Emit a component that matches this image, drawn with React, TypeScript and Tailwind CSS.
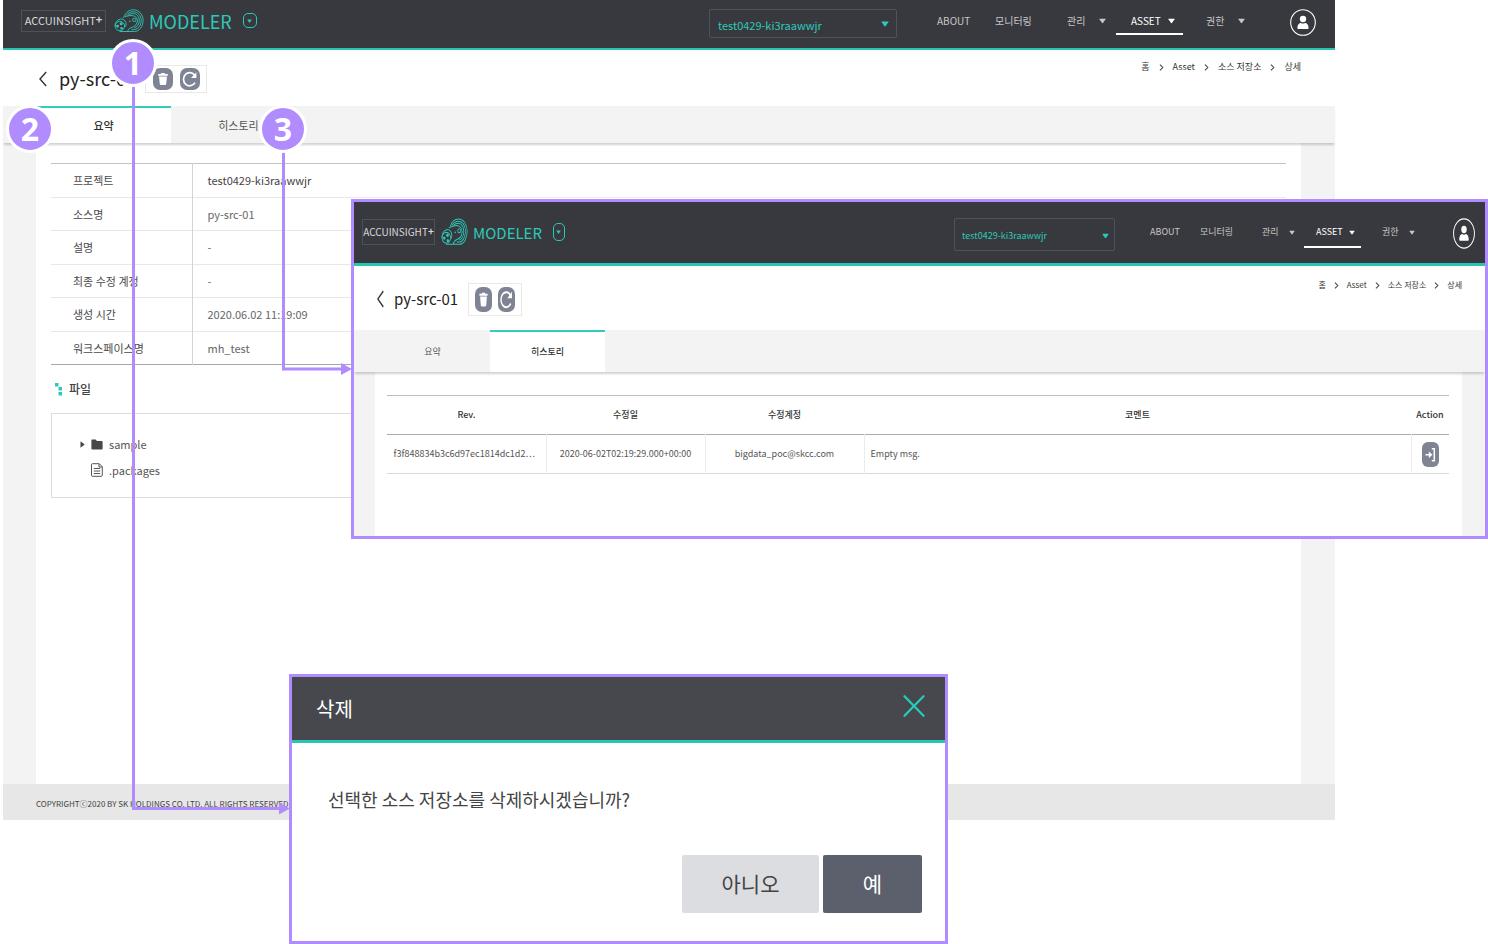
import React from "react";

type Variant = "full" | "inset";

const TEAL = "#2cc9b8";

function MascotLogo({ className }: { className: string }) {
  return (
    <svg viewBox="0 0 30 24" preserveAspectRatio="none" className={className} fill="none" stroke={TEAL} strokeWidth=".9" aria-hidden="true">
      <path d="M10.500 7C12 3 15.500.8 19.300.8c5.600 0 9.800 4.600 9.800 10.600 0 5.800-3.600 11.100-8.600 11.100H5.500" />
      <path d="M12.300 6.400c1.600-2.300 4.200-3.700 7-3.700 4.500 0 7.900 3.900 7.900 8.700 0 4.800-2.800 8.800-6.700 9.200h-3" />
      <path d="M14 6.400c1.400-1.200 3.200-1.900 5.200-1.900 3.500 0 6.100 3.100 6.100 6.900 0 3.600-2 6.700-5 7.400" />
      <path d="M8.800 8.400c2-.8 4.200-1.500 6.700-1.800 4.200-.5 7.600 1 7.900 4.600.2 3.500-2.200 6.200-5.200 7.100-2.500.7-4 1.800-4.700 4.200" />
      <circle cx="20.300" cy="10.900" r="1.700" />
      <circle cx="15.800" cy="12.300" r=".8" fill={TEAL} stroke="none" />
      <path d="M1 17.200c0-3.600 2.100-6.600 5.300-7.200 2-.3 3.800.5 4.900 2.100 1 1.600 1.200 3.600.4 5.600" />
      <circle cx="5.900" cy="17" r="4.700" />
      <circle cx="3.600" cy="17.200" r="1.400" fill={TEAL} stroke="none" />
      <circle cx="7.200" cy="14.700" r="1.500" fill={TEAL} stroke="none" />
      <circle cx="7.600" cy="19.200" r="1.300" fill={TEAL} stroke="none" />
    </svg>
  );
}

function Caret({ className }: { className: string }) {
  return (
    <svg viewBox="0 0 8 6" className={className} fill="currentColor" aria-hidden="true">
      <path d="M.8.500h6.400q.6 0 .3.600L4.500 5.300q-.5.700-1 0L.500 1.100Q.2.500.8.500z" />
    </svg>
  );
}

const headerStyles = {
  full: {
    bar: "h-[50px] border-b-2 pl-[18px] pr-[19px]",
    brand: "h-[22px] w-[85px] text-[11px]",
    logo: "ml-2 h-[24px] w-[30px]",
    product: "ml-[5px] text-[18px]",
    toggle: "ml-[11px] h-[15px] w-[14px] rounded-[5px]",
    left: "-mt-[7px]",
    selectBox: "h-[29px] w-[188px] -mt-px",
    select: "pl-2 pt-[3px] text-[11px]",
    selectCaret: "right-2 top-[12px] h-[6px] w-[8px]",
    nav: "leading-[28px] text-[10px] ml-[40px] pt-[7px]",
    caret: "h-[6px] w-[7px]",
    about: "w-[58px]",
    monitor: "w-[72px]",
    manage: "w-[49px] pr-[10px]",
    asset: "w-[67px] pl-[15px] pr-2",
    rights: "w-[39px] ml-[23px]",
    avatar: "h-[27px] w-[26px]",
    avatarWrap: "-mt-[3px] ml-[45px]",
  },
  inset: {
    bar: "h-[64px] border-b-3 pl-2 pr-[10px]",
    brand: "h-[26px] w-[73px] text-[10px]",
    logo: "ml-[6px] h-[28px] w-[27px]",
    product: "ml-[5px] text-[15px]",
    toggle: "ml-[11px] h-[18px] w-[12px] rounded-[5px]",
    left: "-mt-px",
    selectBox: "h-[33px] w-[161px] mt-1",
    select: "pl-[7px] pt-[3px] text-[9px]",
    selectCaret: "right-[6px] top-[15px] h-[6px] w-[7px]",
    nav: "leading-[32px] text-[9px] ml-[35px] pt-[14px]",
    caret: "h-[5px] w-[6px]",
    about: "w-[50px]",
    monitor: "w-[62px]",
    manage: "w-[42px] pr-[9px]",
    asset: "w-[57px] pl-[12px] pr-[6px]",
    rights: "w-[33px] ml-[21px]",
    avatar: "h-[31px] w-[22px]",
    avatarWrap: "mt-px ml-[38px]",
  },
};

function AppHeader({ variant }: { variant: Variant }) {
  const s = headerStyles[variant];
  return (
    <header className={`flex items-center border-[#28c5b5] bg-[#38393e] ${s.bar}`}>
      <div className={`flex items-center ${s.left}`}>
        <a href="#home" className={`flex items-center justify-center border border-[#505158] leading-none text-[#d8d8da] ${s.brand}`}>
          ACCUINSIGHT<span className="mb-[3px] font-bold">+</span>
        </a>
        <MascotLogo className={s.logo} />
        <span className={`leading-none text-[#2cc9b8] ${s.product}`}>MODELER</span>
        <button type="button" aria-label="Switch product" className={`flex items-center justify-center border border-[#2cc9b8] text-[#2cc9b8] ${s.toggle}`}>
          <Caret className="h-[4px] w-[5px]" />
        </button>
      </div>

      <div className={`relative ml-auto ${s.selectBox}`}>
        <select aria-label="Project" className={`h-full w-full appearance-none rounded-[2px] border border-[#505160] bg-transparent text-[#2cc9b8] ${s.select}`}>
          <option>test0429-ki3raawwjr</option>
        </select>
        <Caret className={`pointer-events-none absolute text-[#2cc9b8] ${s.selectCaret}`} />
      </div>

      <nav className={`flex items-start self-start whitespace-nowrap text-[#c6c6c9] ${s.nav}`}>
        <a href="#about" className={s.about}>ABOUT</a>
        <a href="#monitoring" className={s.monitor}>모니터링</a>
        <a href="#manage" className={`flex items-center justify-between ${s.manage}`}>
          관리 <Caret className={s.caret} />
        </a>
        <a href="#asset" className={`flex items-center justify-between text-white shadow-[inset_0_-2px_#ffffff] ${s.asset}`}>
          ASSET <Caret className={s.caret} />
        </a>
        <a href="#rights" className={`flex items-center justify-between ${s.rights}`}>
          권한 <Caret className={s.caret} />
        </a>
      </nav>

      <button type="button" aria-label="Account" className={s.avatarWrap}>
        <svg viewBox="0 0 26 27" preserveAspectRatio="none" className={s.avatar} aria-hidden="true">
          <ellipse cx="13" cy="13.500" rx="12.300" ry="12.800" fill="none" stroke="#fff" strokeWidth="1.100" />
          <circle cx="13" cy="10" r="3.200" fill="#fff" />
          <path d="M7.400 19c0-3.600 1.800-5 3.600-5.100 1 .8 3 .8 4 0 1.800.1 3.600 1.500 3.600 5.100q0 .9-.9.9H8.300q-.9 0-.9-.9z" fill="#fff" />
        </svg>
      </button>
    </header>
  );
}

const titleStyles = {
  full: {
    bar: "h-[56px] pl-[36px] pr-[34px]",
    back: "h-[16px] w-2",
    title: "ml-[12px] w-[86px] text-[18px]",
    row: "mt-px",
    tools: "h-[28px] w-[62px] gap-[7px]",
    tool: "h-[22px] w-[20px] rounded-[7px]",
    crumbs: "gap-[9px] pt-[8px] text-[9px]",
  },
  inset: {
    bar: "h-[64px] pl-[23px] pr-[23px]",
    back: "h-[18px] w-[7px]",
    title: "ml-[10px] w-[74px] text-[15px]",
    row: "mt-px",
    tools: "h-[33px] w-[54px] gap-[6px]",
    tool: "h-[25px] w-[17px] rounded-[7px]",
    crumbs: "gap-2 pt-[10px] text-[8px]",
  },
};

function TrashIcon() {
  return (
    <svg viewBox="0 0 20 22" preserveAspectRatio="none" className="h-full w-full" fill="#fff" aria-hidden="true">
      <path d="M8.300 5h3.400l.5 1h2.600v1.700H5.200V6h2.600zM6 8.400h8l-.8 7.700q-.1 1-1.100 1H7.900q-1 0-1.100-1z" />
    </svg>
  );
}

function RefreshIcon() {
  return (
    <svg viewBox="0 0 20 22" preserveAspectRatio="none" className="h-full w-full" fill="none" stroke="#fff" strokeWidth="1.700" aria-hidden="true">
      <path d="M15 14.600A6.200 6.600 0 1 1 14.800 7.400" />
      <path d="M16.400 4.200v5.700h-5.400z" fill="#fff" stroke="none" />
    </svg>
  );
}

function Chevron() {
  return (
    <svg viewBox="0 0 5 8" className="h-[7px] w-[5px]" fill="none" stroke="#444" strokeWidth="1.200" aria-hidden="true">
      <path d="M.7.700 4 4 .7 7.300" />
    </svg>
  );
}

function TitleBar({ variant }: { variant: Variant }) {
  const s = titleStyles[variant];
  return (
    <div className={`flex items-start justify-between bg-white ${s.bar}`}>
      <div className={`flex h-full items-center ${s.row}`}>
        <a href="#back" aria-label="Back">
          <svg viewBox="0 0 8 16" preserveAspectRatio="none" className={s.back} fill="none" stroke="#333" strokeWidth="1.400" aria-hidden="true">
            <path d="M7.200 1 1 8l6.200 7" />
          </svg>
        </a>
        <h1 className={`-mt-[2px] leading-none whitespace-nowrap text-[#222] ${s.title}`}>py-src-01</h1>
        <div className={`flex items-center justify-center border border-[#e9e9e9] ${s.tools}`}>
          <button type="button" aria-label="Delete" className={`bg-[#7e8493] ${s.tool}`}><TrashIcon /></button>
          <button type="button" aria-label="Refresh" className={`bg-[#7e8493] ${s.tool}`}><RefreshIcon /></button>
        </div>
      </div>
      <nav aria-label="Breadcrumb" className={`flex items-center leading-[18px] whitespace-nowrap text-[#333] ${s.crumbs}`}>
        <a href="#home">홈</a>
        <Chevron />
        <a href="#asset">Asset</a>
        <Chevron />
        <a href="#source">소스 저장소</a>
        <Chevron />
        <span>상세</span>
      </nav>
    </div>
  );
}

const tabStyles = {
  full: { bar: "h-[37px] pl-[33px]", tab: "w-[135px] text-[11px]" },
  inset: { bar: "h-[42px] pl-[21px]", tab: "w-[115px] text-[9px]" },
};

function Tabs({ variant, active }: { variant: Variant; active: number }) {
  const s = tabStyles[variant];
  return (
    <div role="tablist" className={`relative flex bg-[#f3f3f3] shadow-[0_3px_2px_-1px_rgba(0,0,0,0.18)] ${s.bar}`}>
      {["요약", "히스토리"].map((label, i) => (
        <button
          key={label}
          type="button"
          role="tab"
          aria-selected={i === active}
          className={`border-t-2 ${s.tab} ${i === active ? "border-[#33cbbb] bg-white font-medium text-[#333]" : "border-transparent text-[#555]"}`}
        >
          {label}
        </button>
      ))}
    </div>
  );
}

const summary = [
  ["프로젝트", "test0429-ki3raawwjr"],
  ["소스명", "py-src-01"],
  ["설명", "-"],
  ["최종 수정 계정", "-"],
  ["생성 시간", "2020.06.02 11:19:09"],
  ["워크스페이스명", "mh_test"],
];

function SummaryPage() {
  return (
    <div className="mr-[153px] ml-[3px] flex min-h-[820px] flex-col">
      <AppHeader variant="full" />
      <TitleBar variant="full" />
      <Tabs variant="full" active={0} />
      <div className="flex grow bg-[#f3f3f3] pr-[34px] pl-[33px]">
        <main className="grow bg-white px-[15px] pt-5">
          <table className="h-[202px] w-full border-collapse border-t border-b border-t-[#c4c4c4] border-b-[#a8a8a8] text-left text-[11px]">
            <tbody>
              {summary.map(([name, value], i) => (
                <tr key={name} className="border-t border-[#e8e8e8] first:border-t-[#c4c4c4]">
                  <th scope="row" className="w-[141px] border-r border-r-[#d4d4d4] py-0 pl-[22px] font-normal text-[#4a4a4a]">{name}</th>
                  <td className={`py-0 pl-[15px] ${i === 0 ? "text-[#444]" : "text-[#666]"}`}>{value}</td>
                </tr>
              ))}
            </tbody>
          </table>
          <h2 className="mt-[13px] flex h-[22px] items-center gap-[6px] pl-1 text-[12px] font-medium text-[#444]">
            <svg viewBox="0 0 8 13" className="h-[13px] w-2" fill="#26cdbb" aria-hidden="true">
              <path d="M0 0h3.500v3.500H0zM3.500 4H7v3.500H3.500zM3.500 9H7v3.500H3.500z" />
            </svg>
            파일
          </h2>
          <ul className="mt-[13px] flex flex-col border border-[#dcdcdc] pt-[17px] pb-[14px] pl-[28px] text-[11px] leading-[26px] text-[#555]">
            <li className="flex items-center">
              <svg viewBox="0 0 5 7" className="h-[7px] w-[5px]" fill="#444" aria-hidden="true"><path d="M.5.300 4.700 3.500.5 6.700z" /></svg>
              <svg viewBox="0 0 12 11" className="ml-[6px] h-[11px] w-3" fill="#484848" aria-hidden="true">
                <path d="M.8.500h3.900l1.200 1.400h4.900q.8 0 .8.800v7q0 .8-.8.800H1.200q-.8 0-.8-.8V1.200q0-.7.4-.7z" />
              </svg>
              <span className="ml-[6px]">sample</span>
            </li>
            <li className="flex items-center pl-[11px]">
              <svg viewBox="0 0 12 14" className="h-[14px] w-3" fill="none" stroke="#555" aria-hidden="true">
                <path d="M1.500.700h6.800l3 3v8.600q0 1-1 1H1.500q-1 0-1-1V1.700q0-1 1-1zM8 1v3h3M2.800 5.500h6.400M2.800 8h6.400M2.800 10.500h6.400" />
              </svg>
              <span className="ml-[6px]">.packages</span>
            </li>
          </ul>
        </main>
      </div>
      <footer className="h-[36px] bg-[#e7e7e7] pt-[2px] pl-[33px] text-[8px] leading-[36px] whitespace-nowrap text-[#444]">
        COPYRIGHTⓒ2020 BY SK HOLDINGS CO. LTD. ALL RIGHTS RESERVED
      </footer>
    </div>
  );
}

function HistoryWindow() {
  return (
    <section aria-label="히스토리" className="absolute top-[199px] right-0 left-[351px] flex h-[340px] flex-col border-3 border-[#b08cff] bg-white">
      <AppHeader variant="inset" />
      <TitleBar variant="inset" />
      <Tabs variant="inset" active={1} />
      <div className="flex grow bg-[#f3f3f3] pr-[23px] pl-[21px]">
        <main className="grow bg-white pt-[23px] pr-[13px] pl-3">
          <table className="w-full table-fixed border-collapse border-t border-[#bdbdbd] text-[9px] text-[#555]">
            <colgroup>
              <col className="w-[159px]" />
              <col className="w-[159px]" />
              <col className="w-[159px]" />
              <col />
              <col className="w-[38px]" />
            </colgroup>
            <thead>
              <tr className="h-[39px] border-b border-[#ababab] text-[#333]">
                {["Rev.", "수정일", "수정계정", "코멘트", "Action"].map((h) => (
                  <th key={h} scope="col" className="p-0 font-medium">{h}</th>
                ))}
              </tr>
            </thead>
            <tbody>
              <tr className="h-[39px] border-b border-[#dadada] whitespace-nowrap">
                <td className="border-r border-r-[#ebebeb] p-0 pr-1 text-center">
                  f3f848834b3c6d97ec1814dc1d2<span className="font-['Noto_Sans_CJK_JP',sans-serif]">…</span>
                </td>
                <td className="border-r border-r-[#ebebeb] p-0 text-center">2020-06-02T02:19:29.000+00:00</td>
                <td className="border-r border-r-[#ebebeb] p-0 text-center">bigdata_poc@skcc.com</td>
                <td className="border-r border-r-[#ebebeb] p-0 pl-[6px]">Empty msg.</td>
                <td className="p-0">
                  <button type="button" aria-label="Open revision" className="mx-auto block h-[25px] w-[17px] rounded-[6px] bg-[#7e8493]">
                    <svg viewBox="0 0 17 25" className="h-full w-full" fill="none" stroke="#fff" strokeWidth="1.500" aria-hidden="true">
                      <path d="M9.800 6.800h2.500v12h-2.500M3.500 12.700h4" />
                      <path d="M6.800 9.400l3.700 3.300-3.700 3.300z" fill="#fff" stroke="none" />
                    </svg>
                  </button>
                </td>
              </tr>
            </tbody>
          </table>
        </main>
      </div>
    </section>
  );
}

function DeleteDialog() {
  return (
    <section role="dialog" aria-labelledby="delete-title" className="absolute top-[674px] left-[289px] flex h-[270px] w-[659px] flex-col border-3 border-[#b08cff] bg-white">
      <header className="flex h-[66px] items-center justify-between border-b-3 border-[#28c5b5] bg-[#47484d] pr-[20px] pl-[24px]">
        <h2 id="delete-title" className="text-[20px] leading-none text-white">삭제</h2>
        <button type="button" aria-label="Close" className="mb-[5px]">
          <svg viewBox="0 0 22 22" className="h-[22px] w-[22px]" stroke="#26cdbb" strokeWidth="2.200" strokeLinecap="round" aria-hidden="true">
            <path d="M1.500 1.200 20.500 20.800M20.500 1.200 1.500 20.800" />
          </svg>
        </button>
      </header>
      <p className="px-[36px] pt-[42px] text-[18px] leading-[28px] text-[#444]">선택한 소스 저장소를 삭제하시겠습니까?</p>
      <div className="mt-[42px] flex justify-end gap-1 pr-[23px] text-[21px]">
        <button type="button" className="h-[58px] w-[137px] rounded-[2px] bg-[#dcdde1] text-[#444]">아니오</button>
        <button type="button" className="h-[58px] w-[99px] rounded-[2px] bg-[#5c606c] text-white">예</button>
      </div>
    </section>
  );
}

const badge =
  "absolute flex h-[48px] w-[48px] items-center justify-center rounded-full border-3 border-white bg-[#b08cff] font-['Noto_Sans',sans-serif] text-[32px] font-bold leading-none text-white";

export default function App() {
  return (
    <div className="relative min-h-screen overflow-x-hidden bg-white font-['Noto_Sans_CJK_KR',sans-serif]">
      <SummaryPage />
      <HistoryWindow />
      <DeleteDialog />
      <svg width="360" height="820" viewBox="0 0 360 820" className="pointer-events-none absolute top-0 left-0" fill="none" stroke="#b08cff" strokeWidth="3" aria-hidden="true">
        <path d="M133.500 84V808.500H280M283.500 150V369H342" />
        <path d="M279 802.500 290 808.500 279 814.500zM341 363 352 369 341 375z" fill="#b08cff" stroke="none" />
      </svg>
      <span className={`${badge} top-[39px] left-[109px]`}>1</span>
      <span className={`${badge} top-[105px] left-[6px]`}>2</span>
      <span className={`${badge} top-[105px] left-[259px]`}>3</span>
    </div>
  );
}
